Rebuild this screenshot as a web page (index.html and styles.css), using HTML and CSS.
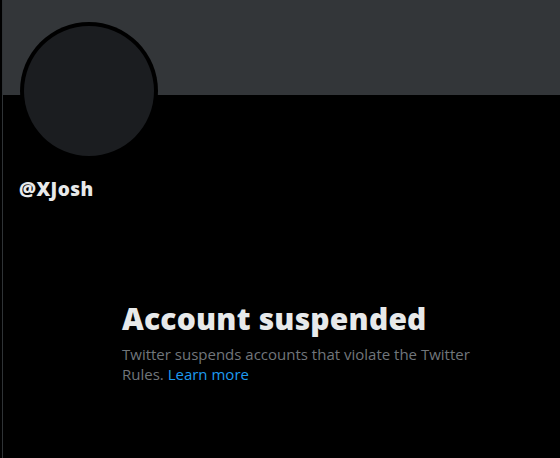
FILE: index.html
```html
<!DOCTYPE html>
<html>
<head>
<meta charset="utf-8">
<link rel="stylesheet" href="styles.css">
</head>
<body>
<div class="column">
  <div class="banner"></div>
  <div class="profile">
    <div class="avatar"><div class="avatar-inner"></div></div>
    <div class="handle">@XJosh</div>
  </div>
  <div class="empty">
    <h1 class="empty-title">Account suspended</h1>
    <p class="empty-text">Twitter suspends accounts that violate the Twitter Rules. <a class="link" href="#">Learn more</a></p>
  </div>
</div>
</body>
</html>
```

FILE: styles.css
```css
html, body {
  margin: 0;
  padding: 0;
  background: #000;
  height: 100%;
  overflow: hidden;
}
body {
  padding-left: 2px;
  font-family: "Open Sans", "Liberation Sans", sans-serif;
  color: #e7e9ea;
}
.column {
  border-left: 1px solid #2f3336;
  height: 100%;
  box-sizing: border-box;
}
.banner {
  height: 95px;
  background: #333639;
}
.profile {
  padding-left: 17px;
}
.avatar {
  width: 138px;
  height: 138px;
  margin-top: -73px;
  border-radius: 50%;
  background: #000;
  padding: 4px;
  box-sizing: border-box;
}
.avatar-inner {
  width: 100%;
  height: 100%;
  border-radius: 50%;
  background: #1b1d20;
}
.handle {
  margin-top: 17px;
  margin-left: -1px;
  font-size: 19px;
  line-height: 24px;
  font-weight: 800;
  letter-spacing: 0.4px;
}
.empty {
  padding-left: 119px;
  margin-top: 100px;
  width: 352px;
}
.empty-title {
  margin: 0;
  font-size: 30px;
  line-height: 36px;
  font-weight: 800;
  letter-spacing: 0.2px;
}
.empty-text {
  margin: 7px 0 0;
  font-size: 15px;
  line-height: 20px;
  color: #71767b;
}
.link {
  color: #1d9bf0;
  text-decoration: none;
}
```
